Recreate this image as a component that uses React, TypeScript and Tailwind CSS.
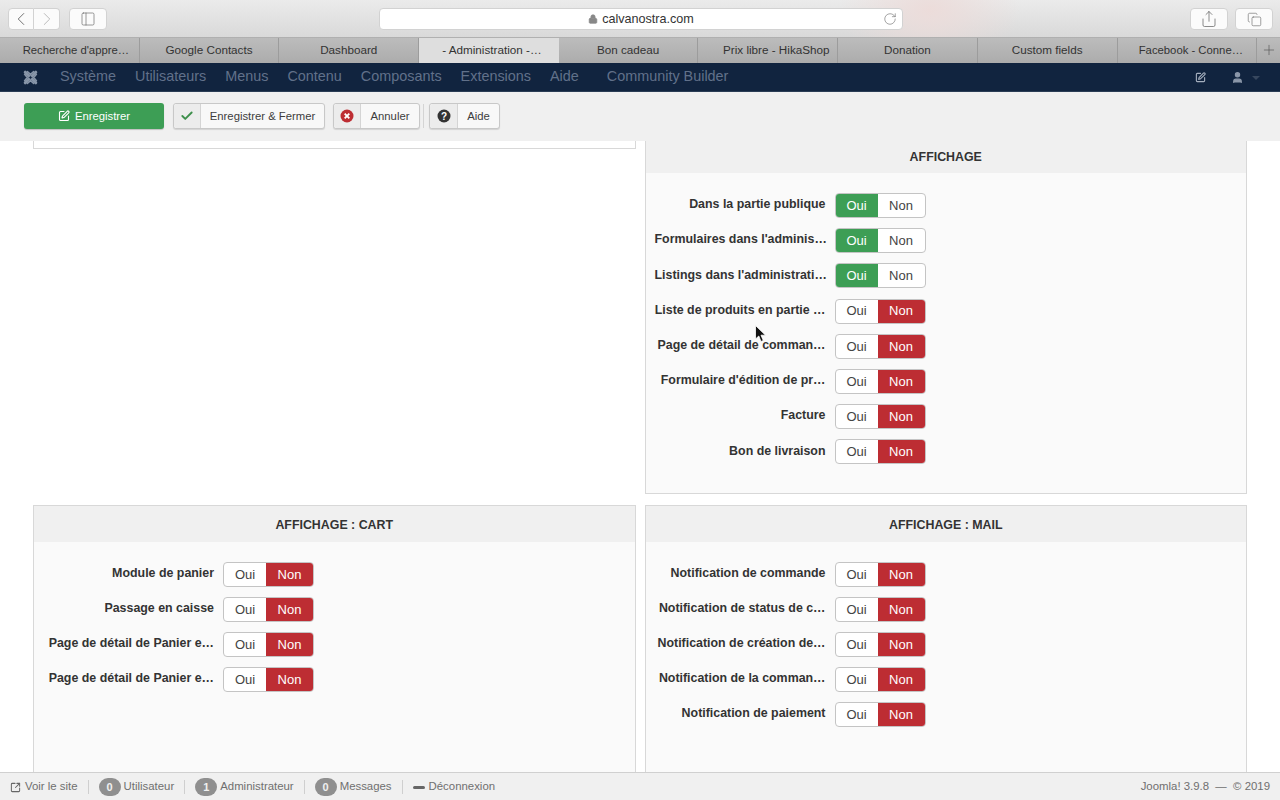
import React from "react"
import { Check, ChevronLeft, ChevronRight, Copy, Lock, PanelLeft, Plus, RotateCw, Share, SquareArrowOutUpRight, SquarePen, User } from "lucide-react"

const tabs = [
    ["Recherche d'appre…", "pl-[13px] text-[11.3px]"],
    ["Google Contacts", ""],
    ["Dashboard", ""],
    ["- Administration -…", "pl-[6px]"],
    ["Bon cadeau", ""],
    ["Prix libre - HikaShop", "pl-[17px]"],
    ["Donation", ""],
    ["Custom fields", ""],
    ["Facebook - Conne…", "pl-[8px] text-[11.3px]"],
]
const menu = [
    ["Système", "ml-[21px]"],
    ["Utilisateurs", "ml-[19px]"],
    ["Menus", "ml-[19px]"],
    ["Contenu", "ml-[19px]"],
    ["Composants", "ml-[19px]"],
    ["Extensions", "ml-[19px]"],
    ["Aide", "ml-[19px]"],
    ["Community Builder", "ml-[28px]"],
]

const affichage: [string, boolean][] = [
    ["Dans la partie publique", true],
    ["Formulaires dans l'adminis…", true],
    ["Listings dans l'administrati…", true],
    ["Liste de produits en partie …", false],
    ["Page de détail de comman…", false],
    ["Formulaire d'édition de pr…", false],
    ["Facture", false],
    ["Bon de livraison", false],
]
const cart: [string, boolean][] = [
    ["Module de panier", false],
    ["Passage en caisse", false],
    ["Page de détail de Panier e…", false],
    ["Page de détail de Panier e…", false],
]
const mail: [string, boolean][] = [
    ["Notification de commande", false],
    ["Notification de status de c…", false],
    ["Notification de création de…", false],
    ["Notification de la comman…", false],
    ["Notification de paiement", false],
]

function Toggle({ on }: { on: boolean }) {
    return (
        <div className="flex h-[25px] w-[91px] rounded-[4px] text-[13px] overflow-hidden border border-[#c4c4c4] bg-white text-[#444]">
            <div className={on ? "w-[42px] flex items-center justify-center bg-[#3d9e55] text-white" : "w-[42px] flex items-center justify-center"}>Oui</div>
            <div className={on ? "flex-1 flex items-center justify-center" : "flex-1 flex items-center justify-center bg-[#bd2d33] text-white"}>Non</div>
        </div>
    )
}

function Rows({ rows, rowClass }: { rows: [string, boolean][], rowClass: string }) {
    return (
        <div className="pt-[15px]">
            {rows.map(([label, on], i) => (
                <div key={i} className={"flex items-center " + rowClass}>
                    <div className="w-[180px] pr-[9px] mb-[2px] text-right text-[12.4px] font-bold text-[#333] whitespace-nowrap">{label}</div>
                    <Toggle on={on} />
                </div>
            ))}
        </div>
    )
}

function Panel({ title, rows, className, headClass, rowClass }: { title: string, rows: [string, boolean][], className: string, headClass: string, rowClass: string }) {
    return (
        <div className={"border border-[#d8d8d8] bg-[#fafafa] " + className}>
            <div className={"flex items-center justify-center bg-[#f0f0f0] text-[12.4px] font-bold text-[#333] " + headClass}>{title}</div>
            <div className="pl-[9px]">
                <Rows rows={rows} rowClass={rowClass} />
            </div>
        </div>
    )
}

function JoomlaLogo() {
    return (
        <svg width="17" height="17" viewBox="0 0 16 16" fill="none" stroke="#8795a8" strokeWidth="2.8" strokeLinecap="round">
            <path d="M3 3 L13 13 M13 3 L3 13" />
            <path d="M5 2.5 L8 5 L11 2.5 M5 13.5 L8 11 L11 13.5 M2.5 5 L5 8 L2.5 11 M13.5 5 L11 8 L13.5 11" strokeWidth="1.6" />
            <path d="M8 6.6 L9.4 8 L8 9.4 L6.6 8 Z" fill="#11243f" stroke="none" />
        </svg>
    )
}

function ToolButton({ icon, label, w, seg }: { icon: React.ReactNode, label: string, w: string, seg: string }) {
    return (
        <div className={"flex h-[26px] rounded-[3px] border border-[#c8c8c8] bg-[#f8f8f8] text-[11.3px] text-[#3d3d3d] shadow-[0_1px_1px_rgba(0,0,0,0.12)] " + w}>
            <div className={"flex items-center justify-center border-r border-[#d4d4d4] bg-[#ececec] rounded-l-[3px] pb-[1px] " + seg}>{icon}</div>
            <div className="flex-1 flex items-center justify-center whitespace-nowrap">{label}</div>
        </div>
    )
}

function Badge({ n }: { n: number }) {
    return <span className="flex h-[18px] w-[22px] items-center justify-center rounded-full bg-[#8f8f8f] text-[11px] font-bold text-[#f0f0f0]">{n}</span>
}

function Sep() {
    return <span className="mx-[10px] h-[14px] w-px bg-[#cfcfcf]" />
}

function SafariButton({ children, className }: { children: React.ReactNode, className: string }) {
    return <div className={"flex h-[22px] items-center justify-center rounded-[4px] border border-[#d2d2d2] bg-[#fbfbfb] text-[#666] " + className}>{children}</div>
}

export default function App() {
    return (
        <div className="relative flex h-[800px] w-[1280px] flex-col overflow-hidden bg-white font-['Liberation_Sans',Arial,sans-serif]">
            {/* safari toolbar */}
            <div className="flex h-[38px] items-start pt-[8px] bg-[radial-gradient(ellipse_90px_60px_at_930px_10px,#ecdcda,transparent),linear-gradient(180deg,#ebebeb,#d9d9d9)] border-b border-[#b0b0b0]">
                <div className="flex ml-[8px]">
                    <SafariButton className="w-[26px] rounded-r-none"><ChevronLeft size={22} strokeWidth={1} /></SafariButton>
                    <SafariButton className="w-[26px] rounded-l-none border-l-0 text-[#b5b5b5]"><ChevronRight size={22} strokeWidth={1} /></SafariButton>
                </div>
                <SafariButton className="w-[38px] ml-[9px]"><PanelLeft size={16} strokeWidth={1} /></SafariButton>
                <div className="relative flex h-[22px] w-[524px] ml-[272px] items-center justify-center rounded-[4px] border border-[#d2d2d2] bg-white text-[12.6px] text-[#333]">
                    <Lock size={10} className="mr-[4px] text-[#888]" fill="#888" />
                    calvanostra.com
                    <RotateCw size={14} strokeWidth={1} className="absolute right-[5px] text-[#666]" />
                </div>
                <SafariButton className="w-[38px] ml-[287px]"><Share size={18} strokeWidth={1} /></SafariButton>
                <SafariButton className="w-[38px] ml-[7px]"><Copy size={15} strokeWidth={1} /></SafariButton>
            </div>

            {/* safari tabs */}
            <div className="flex h-[25px] pb-[1px] bg-[linear-gradient(180deg,#bcbcbc,#acacac)] text-[11.7px] text-[#333]">
                {tabs.map(([t, c], i) => (
                    <div key={i} className={(i === 3
                        ? "flex w-[139.7px] -mb-[1px] pb-[1px] items-center justify-center bg-[#dedede] whitespace-nowrap "
                        : "flex w-[139.7px] -mb-[1px] pb-[1px] items-center justify-center border-r border-[#9c9c9c] whitespace-nowrap ") + c}>{t}</div>
                ))}
                <div className="flex flex-1 items-center justify-center text-[#555]"><Plus size={16} strokeWidth={1} /></div>
            </div>

            {/* joomla menu */}
            <div className="flex h-[29px] items-center bg-[#11243f] border-b border-[#2b3d55] pl-[22px] pr-[20px] text-[14.4px] text-[#61718a]">
                <JoomlaLogo />
                {menu.map(([m, c]) => <span key={m} className={c}>{m}</span>)}
                <div className="ml-auto flex items-center">
                    <SquarePen size={11} className="text-[#a6b0bf]" strokeWidth={2.4} />
                    <User size={13} className="ml-[25px] text-[#8b97a9]" fill="#8b97a9" />
                    <span className="ml-[8px] mt-[2px] h-0 w-0 border-x-[4px] border-t-[4px] border-x-transparent border-t-[#37475e]" />
                </div>
            </div>

            {/* toolbar */}
            <div className="flex h-[49px] items-center bg-[#f0f0f0] pl-[24px] pb-[1px]">
                <div className="flex h-[26px] w-[140px] items-center justify-center rounded-[3px] bg-[#3d9e55] text-[11.3px] text-white shadow-[0_1px_1px_rgba(0,0,0,0.2)]">
                    <SquarePen size={12} className="mr-[5px]" strokeWidth={2.2} />
                    Enregistrer
                </div>
                <div className="ml-[9px]">
                    <ToolButton w="w-[152px]" seg="w-[27px]" label="Enregistrer & Fermer" icon={<Check size={14} strokeWidth={3.2} className="text-[#3d8f4b]" />} />
                </div>
                <div className="ml-[8px]">
                    <ToolButton w="w-[87px]" seg="w-[27px]" label="Annuler" icon={
                        <svg width="14" height="14" viewBox="0 0 14 14"><circle cx="7" cy="7" r="6.5" fill="#bd2d33" /><path d="M4.7 4.7 L9.3 9.3 M9.3 4.7 L4.7 9.3" stroke="#fff" strokeWidth="1.9" /></svg>
                    } />
                </div>
                <span className="ml-[3px] h-[24px] w-px bg-[#d4d4d4]" />
                <div className="ml-[5px]">
                    <ToolButton w="w-[71px]" seg="w-[28px]" label="Aide" icon={
                        <svg width="14" height="14" viewBox="0 0 14 14"><circle cx="7" cy="7" r="6.5" fill="#333" /><text x="7" y="10.5" textAnchor="middle" fontSize="10" fontWeight="700" fill="#fff">?</text></svg>
                    } />
                </div>
            </div>

            {/* content */}
            <div className="flex-1 overflow-hidden px-[33px]">
                <div className="grid grid-cols-2 gap-x-[9px] items-start">
                    <div className="h-[8px] border-x border-b border-[#d8d8d8]" />
                    <Panel title="AFFICHAGE" rows={affichage} className="h-[353px] border-t-0" headClass="h-[32px]" rowClass="h-[35.2px]" />
                </div>
                <div className="mt-[11px] grid grid-cols-2 gap-x-[9px]">
                    <Panel title="AFFICHAGE : CART" rows={cart} className="h-[300px]" headClass="h-[36px] pt-[2px]" rowClass="h-[35px]" />
                    <Panel title="AFFICHAGE : MAIL" rows={mail} className="h-[300px]" headClass="h-[36px] pt-[2px]" rowClass="h-[35px]" />
                </div>
            </div>

            {/* status bar */}
            <div className="flex h-[28px] items-center border-t border-[#d0d0d0] bg-[#f0f0f0] pl-[10px] pr-[10px] pt-[1px] text-[11.4px] text-[#6f6f6f]">
                <SquareArrowOutUpRight size={11} strokeWidth={2.2} className="mr-[4px] text-[#666]" />
                <span>Voir le site</span>
                <Sep />
                <Badge n={0} />
                <span className="ml-[3px]">Utilisateur</span>
                <Sep />
                <Badge n={1} />
                <span className="ml-[3px]">Administrateur</span>
                <Sep />
                <Badge n={0} />
                <span className="ml-[3px]">Messages</span>
                <Sep />
                <span className="h-[3px] w-[12px] rounded-sm bg-[#666] mr-[4px]" />
                <span>Déconnexion</span>
                <span className="ml-auto">Joomla! 3.9.8 &nbsp;—&nbsp; © 2019</span>
            </div>

            {/* mouse pointer */}
            <svg className="absolute left-[755px] top-[325px]" width="12" height="18" viewBox="0 0 12 18">
                <path d="M0.5 0.5 L0.5 14 L3.8 11 L6 16.5 L8.3 15.5 L6 10.2 L10.5 10.2 Z" fill="#111" stroke="#fff" strokeWidth="0.8" />
            </svg>
        </div>
    )
}
